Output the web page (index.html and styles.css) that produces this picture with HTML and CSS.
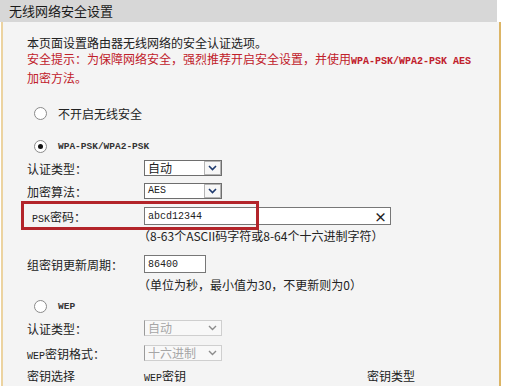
FILE: index.html
```html
<!DOCTYPE html>
<html lang="zh-CN">
<head>
    <meta charset="UTF-8">
    <title>无线网络安全设置</title>
    <link rel="stylesheet" href="styles.css">
</head>
<body>
    <div class="page">
        <div class="title">无线网络安全设置</div>

        <div class="panel">
            <div class="intro">
                <p>本页面设置路由器无线网络的安全认证选项。</p>
                <p class="warn">安全提示：为保障网络安全，强烈推荐开启安全设置，并使用<span class="mono">WPA-PSK/WPA2-PSK AES</span></p>
                <p class="warn">加密方法。</p>
            </div>

            <div class="opt opt-first">
                <span class="radio"></span>
                <span>不开启无线安全</span>
            </div>

            <div class="opt opt-wpa">
                <span class="radio checked"></span>
                <span class="mono tiny">WPA-PSK/WPA2-PSK</span>
            </div>

            <div class="row r-auth">
                <span class="label">认证类型：</span>
                <div class="select">
                    <span class="select-val">自动</span>
                    <span class="select-btn"><svg width="9" height="6" viewBox="0 0 9 6"><path d="M1 1 L4.5 4.5 L8 1" fill="none" stroke="#1e3a6e" stroke-width="1.6"/></svg></span>
                </div>
            </div>

            <div class="row r-enc">
                <span class="label">加密算法：</span>
                <div class="select">
                    <span class="select-val mono small">AES</span>
                    <span class="select-btn"><svg width="9" height="6" viewBox="0 0 9 6"><path d="M1 1 L4.5 4.5 L8 1" fill="none" stroke="#1e3a6e" stroke-width="1.6"/></svg></span>
                </div>
            </div>

            <div class="row r-psk">
                <span class="mark"></span>
                <span class="label"><span class="mono small">PSK</span>密码：</span>
                <div class="input input-psk">
                    <span class="mono small">abcd12344</span>
                    <span class="clear">×</span>
                </div>
            </div>
            <div class="hint hint-psk">（8-63个ASCII码字符或8-64个十六进制字符）</div>

            <div class="row r-group">
                <span class="label">组密钥更新周期：</span>
                <div class="input input-short">
                    <span class="mono small">86400</span>
                </div>
            </div>
            <div class="hint hint-group">（单位为秒，最小值为30，不更新则为0）</div>

            <div class="opt opt-wep">
                <span class="radio"></span>
                <span class="mono tiny">WEP</span>
            </div>

            <div class="row r-wauth">
                <span class="label">认证类型：</span>
                <div class="select disabled">
                    <span class="select-val">自动</span>
                    <span class="select-btn"><svg width="9" height="6" viewBox="0 0 9 6"><path d="M1 1 L4.5 4.5 L8 1" fill="none" stroke="#8c8c8c" stroke-width="1.4"/></svg></span>
                </div>
            </div>

            <div class="row r-wfmt">
                <span class="label"><span class="mono small">WEP</span>密钥格式：</span>
                <div class="select disabled">
                    <span class="select-val">十六进制</span>
                    <span class="select-btn"><svg width="9" height="6" viewBox="0 0 9 6"><path d="M1 1 L4.5 4.5 L8 1" fill="none" stroke="#8c8c8c" stroke-width="1.4"/></svg></span>
                </div>
            </div>

            <div class="row r-keys">
                <span class="label">密钥选择</span>
                <span class="col-key"><span class="mono small">WEP</span>密钥</span>
                <span class="col-type">密钥类型</span>
            </div>
        </div>
    </div>
</body>
</html>
```

FILE: styles.css
```css
body {
    margin: 0;
    background: #fff;
    font-family: "Noto Sans CJK SC", "Noto Sans", sans-serif;
    font-size: 12px;
    color: #222;
}
p {
    margin: 0;
}
.page {
    width: 502px;
    height: 386px;
    overflow: hidden;
}
.title {
    width: 497px;
    height: 22px;
    line-height: 22px;
    padding-left: 9px;
    box-sizing: border-box;
    background: #d7d7d7;
    font-size: 13px;
    color: #1a1a1a;
}
.panel {
    margin-left: 1px;
    width: 500px;
    height: 364px;
    box-sizing: border-box;
    padding: 13px 0 0 24px;
    background: #f4f4f4;
    border-left: 2px solid #ecd3a0;
    border-right: 2px solid #dcb566;
}
.mono {
    font-family: "Liberation Mono", "DejaVu Sans Mono", monospace;
}
.small {
    font-size: 10px;
}
.tiny {
    font-size: 9.5px;
    font-weight: bold;
    color: #333;
}
.intro {
    line-height: 16px;
}
.warn {
    color: #c0202a;
}
.warn .mono {
    font-size: 10px;
    font-weight: bold;
}

/* radio options */
.opt {
    display: flex;
    align-items: center;
    height: 20px;
    padding-left: 7px;
}
.opt-first {
    margin-top: 17px;
}
.opt-wpa {
    margin-top: 13px;
}
.opt-wep {
    margin-top: 3px;
}
.radio {
    width: 11px;
    height: 11px;
    border: 1px solid #8a8a8a;
    border-radius: 50%;
    background: #fff;
    margin-right: 11px;
    position: relative;
}
.radio.checked::after {
    content: "";
    position: absolute;
    left: 3px;
    top: 3px;
    width: 5px;
    height: 5px;
    border-radius: 50%;
    background: #111;
}

/* form rows */
.row {
    position: relative;
    display: flex;
    align-items: center;
    height: 22px;
}
.label {
    width: 117px;
    flex: none;
}
.r-auth { margin-top: 1px; }
.r-enc { margin-top: 1px; }
.r-psk { margin-top: 3px; }
.r-group { margin-top: 9px; }
.r-wauth { margin-top: 1px; }
.r-wfmt { margin-top: 3px; }
.r-keys { margin-top: 0; }

.r-psk .label {
    padding-left: 5px;
    width: 112px;
}
.mark {
    position: absolute;
    left: -6px;
    top: -4px;
    width: 238px;
    height: 29px;
    box-sizing: border-box;
    border: 3px solid #b3242a;
}

.select {
    display: flex;
    width: 78px;
    height: 16px;
    box-sizing: border-box;
    border: 1px solid #6e6e6e;
    background: #fff;
}
.select-val {
    flex: 1;
    padding-left: 3px;
    line-height: 14px;
}
.select-btn {
    width: 17px;
    display: flex;
    align-items: center;
    justify-content: center;
    border: 1px solid #b4b4b4;
    box-sizing: border-box;
    background: #f7f7f7;
}
.select.disabled {
    border-color: #cfcfcf;
    border-left-color: #9a9a9a;
    background: #f8f8f8;
    color: #a6a6a6;
}
.select.disabled .select-btn {
    border: none;
    background: transparent;
}

.input {
    display: flex;
    align-items: center;
    height: 18px;
    box-sizing: border-box;
    border: 1px solid #777;
    background: #fff;
    padding-left: 3px;
}
.input-psk {
    width: 247px;
}
.input-short {
    width: 62px;
}
.clear {
    margin-left: auto;
    margin-right: 3px;
    font-size: 13px;
    font-weight: bold;
    color: #222;
}

.hint {
    margin-left: 111px;
    line-height: 16px;
}
.hint-psk { margin-top: 1px; }
.hint-group { margin-top: 2px; }

.col-key {
    width: 223px;
    flex: none;
}
```
